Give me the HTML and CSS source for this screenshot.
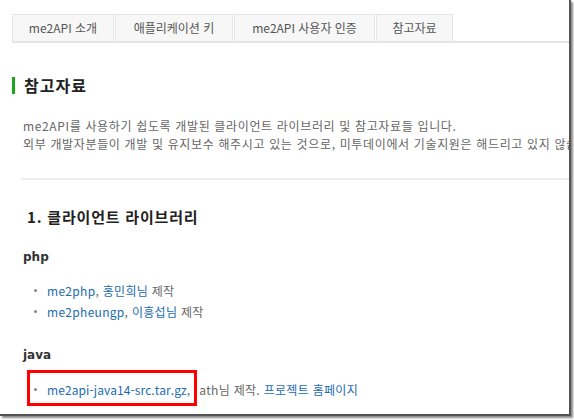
FILE: index.html
```html
<!DOCTYPE html>
<html lang="ko">
<head>
<meta charset="utf-8">
<link rel="stylesheet" href="styles.css">
</head>
<body>
<div class="frame">
  <ul class="tabs">
    <li class="tab t1">me2API 소개</li>
    <li class="tab t2">애플리케이션 키</li>
    <li class="tab t3">me2API 사용자 인증</li>
    <li class="tab t4">참고자료</li>
  </ul>
  <h1 class="title">참고자료</h1>
  <p class="intro">me2API를 사용하기 쉽도록 개발된 클라이언트 라이브러리 및 참고자료들 입니다.<br>외부 개발자분들이 개발 및 유지보수 해주시고 있는 것으로, 미투데이에서 기술지원은 해드리고 있지 않습니다.</p>
  <hr class="rule">
  <h2 class="section">1. 클라이언트 라이브러리</h2>
  <h3 class="lang">php</h3>
  <ul class="libs">
    <li><a class="link">me2php</a>, <a class="link">홍민희님</a> 제작</li>
    <li><a class="link">me2pheungp</a>, <a class="link">이흥섭님</a> 제작</li>
  </ul>
  <h3 class="lang java">java</h3>
  <ul class="libs last">
    <li class="boxed"><a class="link">me2api-java14-src.tar.gz</a>,<span class="gap"></span>ath님 제작. <a class="link">프로젝트 홈페이지</a><span class="mark"></span></li>
  </ul>
</div>
</body>
</html>
```
FILE: styles.css
```css
html, body {
  margin: 0;
  padding: 0;
  background: #fff;
}
body {
  width: 574px;
  height: 420px;
  overflow: hidden;
  font-family: "Noto Sans CJK KR", "Noto Sans", sans-serif;
}
.frame {
  position: relative;
  width: 569px;
  height: 414px;
  background: #fff;
  overflow: hidden;
  border-right: 2px solid #555;
  border-bottom: 2px solid #555;
  box-shadow: 2px 2px 2px #888;
}
.tabs {
  list-style: none;
  margin: 14px 0 0 12px;
  padding: 0;
  display: flex;
  border-bottom: 2px solid #e4e4e4;
  height: 27px;
}
.tab {
  background: #f7f7f7;
  border: 1px solid #e6e6e6;
  border-bottom: none;
  margin-right: 1px;
  color: #555;
  font-size: 12px;
  line-height: 26px;
  text-align: center;
  box-sizing: border-box;
}
.t1 { width: 102px; }
.t2 { width: 118px; }
.t3 { width: 141px; }
.t4 { width: 77px; }
.title {
  margin: 34px 0 0 12px;
  padding-left: 9px;
  border-left: 3px solid #1aa51a;
  font-size: 16px;
  line-height: 17px;
  height: 17px;
  font-weight: bold;
  color: #222;
  letter-spacing: 1px;
}
.intro {
  margin: 23px 0 0 23px;
  font-size: 12px;
  line-height: 18px;
  color: #666;
  white-space: nowrap;
  letter-spacing: 0.65px;
}
.rule {
  margin: 25px 0 0 21px;
  border: none;
  height: 2px;
  background: #eee;
}
.section {
  margin: 27px 0 0 27px;
  font-size: 15px;
  font-weight: bold;
  line-height: 20px;
  color: #222;
  letter-spacing: 0.8px;
}
.lang {
  margin: 22px 0 0 23px;
  font-size: 12px;
  font-weight: bold;
  line-height: 16px;
  color: #333;
  font-family: "DejaVu Sans", sans-serif;
}
.lang.java { margin-top: 25px; }
.libs {
  margin: 15px 0 0 34px;
  padding: 0;
  list-style: none;
  font-size: 12px;
  line-height: 21px;
  color: #666;
  letter-spacing: 0.3px;
}
.libs.last { margin-top: 16px; }
.libs li {
  position: relative;
  padding-left: 13px;
}
.libs li::before {
  content: "";
  position: absolute;
  left: 0;
  top: 9px;
  width: 3px;
  height: 3px;
  border-radius: 50%;
  background: #888;
}
.libs.last .link:first-child {
  letter-spacing: 0.1px;
}
.link {
  color: #1c6bb0;
  text-decoration: none;
}
.gap {
  display: inline-block;
  width: 9px;
}
.mark {
  display: block;
  position: absolute;
  box-sizing: border-box;
  left: -7px;
  top: -9px;
  width: 170px;
  height: 36px;
  border: 3px solid #f00;
}
```
